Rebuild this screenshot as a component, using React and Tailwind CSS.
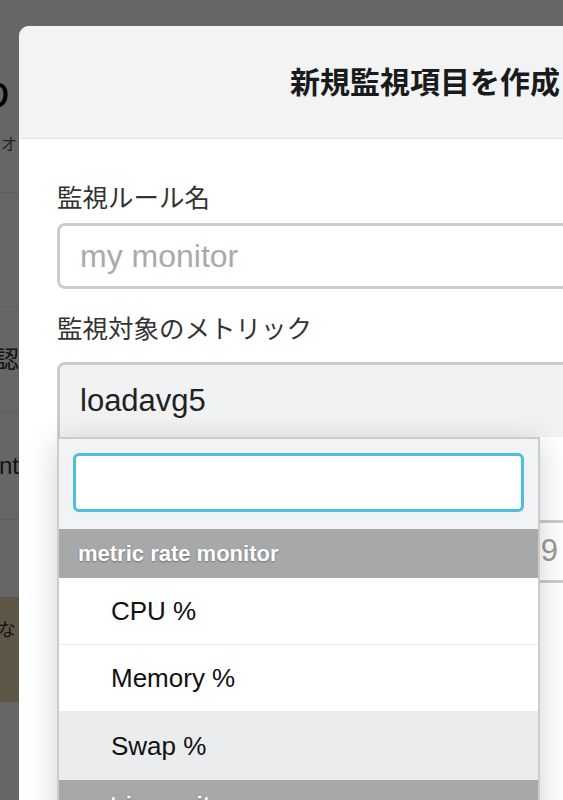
import React from 'react';

function BackgroundStrip() {
  // 背面のページ（モーダルの左にわずかに見える部分）
  return (
    <div className="w-[19px] overflow-hidden text-[#333]">
      <div className="h-[193px] border-b border-[#e9e9e9] pt-[78px]">
        <div className="flex justify-end whitespace-nowrap">
          <span className="mr-[6px] text-[30px] font-bold leading-[36px] text-black">監視り</span>
        </div>
        <div className="mt-[19px] flex justify-end whitespace-nowrap">
          <span className="mr-[2px] text-[16px] leading-[24px] text-[#555]">設定オ</span>
        </div>
      </div>
      <div className="h-[114px] border-b border-[#e9e9e9]" />
      <div className="flex h-[106px] items-center justify-end whitespace-nowrap border-b border-[#e9e9e9]">
        <span className="text-[24px] leading-[30px]">確認</span>
      </div>
      <div className="flex h-[107px] items-center justify-end whitespace-nowrap border-b border-[#e9e9e9]">
        <span className="text-[24px] leading-[30px]">alert management</span>
      </div>
      <div className="h-[77px]" />
      <div className="flex h-[105px] items-start justify-end whitespace-nowrap bg-[#ecdab5] pt-[21px]">
        <span className="mr-[3px] text-[18px] leading-[24px]">ありません。な</span>
      </div>
    </div>
  );
}

function GroupHeader({ label }) {
  return (
    <div className="flex h-[49px] items-center bg-[#a7a8aa] px-[19px] text-[22px] font-bold text-white [text-shadow:0_1px_2px_rgba(0,0,0,0.35)]">
      {label}
    </div>
  );
}

export default function App() {
  const rateItems = [
    { name: 'CPU %', active: false },
    { name: 'Memory %', active: false },
    { name: 'Swap %', active: true },
  ];

  return (
    <div className="relative h-[800px] w-[563px] overflow-hidden bg-white font-['Liberation_Sans','Noto_Sans_CJK_JP',sans-serif]">
      <BackgroundStrip />

      {/* オーバーレイ + モーダル */}
      <div className="absolute inset-0 bg-black/60">
        <div className="ml-[19px] mt-[26px] min-h-[800px] w-[812px] rounded-tl-[10px] bg-white">
          <div className="flex h-[113px] items-center justify-center rounded-tl-[10px] border-b border-[#e4e5e7] bg-[#f2f3f5]">
            <h2 className="whitespace-nowrap text-[30px] font-bold text-[#1a1a1a]">新規監視項目を作成</h2>
          </div>

          <div className="px-[38px] pt-[41px] pb-[40px]">
            <label className="mb-[7px] block text-[25.5px] leading-[36px] text-[#333]">監視ルール名</label>
            <input
              readOnly
              placeholder="my monitor"
              className="block h-[66px] w-full rounded-[8px] border-[3px] border-[#ccc] bg-white px-[20px] text-[32px] text-[#333] outline-none placeholder:text-[#aaa]"
            />

            <label className="mt-[22px] mb-[15px] block text-[25.5px] leading-[36px] text-[#333]">監視対象のメトリック</label>
            <div className="relative">
              <div className="flex h-[75px] items-center rounded-t-[8px] border-x-[3px] border-t-[3px] border-[#ccc] bg-[#f1f2f4] px-[20px] text-[31px] text-[#222]">
                loadavg5
              </div>

              {/* ドロップダウン */}
              <div className="absolute left-0 top-full z-10 w-[483px] border-2 border-[#ccc] bg-white shadow-[0_6px_30px_rgba(0,0,0,0.18)]">
                <div className="bg-[#f2f3f5] px-[14px] pt-[14px] pb-[17px]">
                  <div className="h-[59px] rounded-[6px] border-[3px] border-[#4dbfdc] bg-white" />
                </div>
                <GroupHeader label="metric rate monitor" />
                {rateItems.map((item, i) => (
                  <div
                    key={item.name}
                    className={`flex items-center px-[52px] text-[26px] text-[#111] ${
                      item.active ? 'h-[68px] bg-[#ebecee]' : 'h-[67px] bg-white'
                    } ${i < 2 ? 'border-b border-[#ececec]' : ''}`}
                  >
                    {item.name}
                  </div>
                ))}
                <GroupHeader label="metric monitor" />
                <div className="flex h-[67px] items-center px-[52px] text-[26px] text-[#111]">loadavg5</div>
              </div>
            </div>

            {/* ドロップダウンの下に隠れている閾値 */}
            <label className="mt-[20px] mb-[27px] block text-[25px] leading-[36px] text-[#333]">閾値</label>
            <div className="flex gap-[12px]">
              <div className="h-[63px] w-[420px] rounded-[8px] border-[3px] border-[#ccc] bg-white" />
              <div className="flex h-[63px] w-[200px] items-center rounded-[8px] border-[3px] border-[#ccc] bg-white pl-[23px] pr-[20px] text-[31px] text-[#999]">
                0.9
              </div>
            </div>
          </div>
        </div>
      </div>
    </div>
  );
}
